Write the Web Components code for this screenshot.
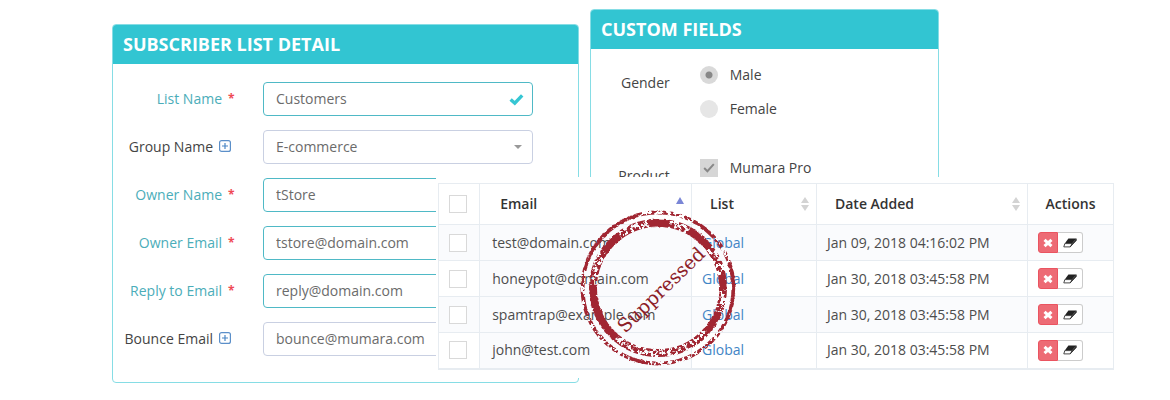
<!DOCTYPE html>
<html lang="en">
<head>
<meta charset="utf-8">
<title>Suppression list</title>
<style>
body { margin: 0; background: #fff; font-family: "Open Sans", "Noto Sans", sans-serif; font-size: 14px; color: #4d4d4d; }
</style>
</head>
<body>
<list-stage>
  <titled-panel slot="detail" heading="SUBSCRIBER LIST DETAIL">
    <form-fields>
      <text-field label="List Name" value="Customers" state="required" checked></text-field>
      <pick-field label="Group Name" value="E-commerce"></pick-field>
      <text-field label="Owner Name" value="tStore" state="required"></text-field>
      <text-field label="Owner Email" value="tstore@domain.com" state="required"></text-field>
      <text-field label="Reply to Email" value="reply@domain.com" state="required"></text-field>
      <text-field label="Bounce Email" value="bounce@mumara.com"></text-field>
    </form-fields>
  </titled-panel>
  <titled-panel slot="custom" heading="CUSTOM FIELDS">
    <choice-group label="Gender" type="radio" options="Male,Female"></choice-group>
    <choice-group label="Product" type="checkbox" options="Mumara Pro"></choice-group>
  </titled-panel>
  <contact-table slot="table"></contact-table>
</list-stage>

<script>
const define = (name, markup, setup) => customElements.define(name, class extends HTMLElement {
  connectedCallback() {
    if (this.shadowRoot) return;
    const root = this.attachShadow({ mode: "open" });
    root.innerHTML = "<style>*{box-sizing:border-box}</style>" + (typeof markup === "function" ? markup(this) : markup);
    if (setup) setup(root, this);
  }
});
const attr = (el, n) => el.getAttribute(n) || "";

define("list-stage", `
<style>
  :host { display: grid; grid-template-columns: 112fr 324fr 143fr 11fr 349fr 177fr 54fr; align-items: start; }
  .detail { grid-area: 1 / 2 / 2 / 4; margin-top: 24px; }
  .custom { grid-area: 1 / 5 / 2 / 6; margin-top: 9px; }
  .table { grid-area: 1 / 3 / 2 / 7; margin-top: 177px; z-index: 1; }
</style>
<div class="detail"><slot name="detail"></slot></div>
<div class="custom"><slot name="custom"></slot></div>
<div class="table"><slot name="table"></slot></div>`);

define("titled-panel", el => `
<style>
  :host { display: block; border: 1px solid #86dde5; border-radius: 4px; overflow: hidden; background: #fff; }
  h2 { margin: -1px -1px 0; padding: 0 11px; background: #32c5d2; color: #fff; font-size: 18px; font-weight: 700; line-height: 40px; }
</style>
<h2>${attr(el, "heading")}</h2>
<slot></slot>`);

define("form-fields", `
<style>
  :host { display: flex; flex-direction: column; gap: 14px; padding: 18px 45px 26px 0; }
</style>
<slot></slot>`);

const fieldStyle = `
<style>
  :host { display: grid; grid-template-columns: 121fr 270fr; column-gap: 29px; align-items: center; color: #444; }
  label { display: flex; justify-content: flex-end; align-items: center; gap: 6px; padding-bottom: 2px; white-space: nowrap; }
  :host([state=required]) label { color: #4badb9; }
  .star { color: #ef4a55; width: 6px; font-size: 12px; font-weight: 700; }
  .plus { width: 12px; height: 12px; margin-right: 3px; }
  .box { position: relative; }
  input, select { display: block; width: 100%; height: 34px; margin: 0; padding: 0 12px 2px; border: 1px solid #c9d0e2; border-radius: 4px; background: #fff; color: #6b6b6b; font: inherit; appearance: none; outline: 0; }
  :host([state=required]) input { border-color: #4fb9c6; }
  .mark { position: absolute; right: 9px; top: 11px; }
  .caret { position: absolute; right: 11px; top: 15px; }
</style>`;
const labelFor = el => `<label for="f">${attr(el, "label")}${attr(el, "state") === "required"
  ? `<span class="star">*</span>`
  : `<svg class="plus" viewBox="0 0 12 12"><rect x=".6" y=".6" width="10.8" height="10.8" rx="2" fill="none" stroke="#5b8fc9" stroke-width="1.2"/><path d="M6 3v6M3 6h6" stroke="#4a86c5" stroke-width="1.2"/></svg>`}</label>`;

define("text-field", el => `${fieldStyle}${labelFor(el)}
<div class="box"><input id="f" type="text" value="${attr(el, "value")}">
${el.hasAttribute("checked") ? `<svg class="mark" width="15" height="13" viewBox="0 0 15 13"><path d="M1.6 6.4 5.8 10.2 13.2 2.4" fill="none" stroke="#36c6d3" stroke-width="3.4"/></svg>` : ""}</div>`);

define("pick-field", el => `${fieldStyle}${labelFor(el)}
<div class="box"><select id="f"><option>${attr(el, "value")}</option></select>
<svg class="caret" width="8" height="4" viewBox="0 0 8 4"><path d="M0 0h8L4 4z" fill="#999"/></svg></div>`);

define("choice-group", el => `
<style>
  :host { display: block; padding: 17px 0 24px; color: #444; }
  fieldset { display: grid; grid-template-columns: 79fr 239fr; column-gap: 30px; margin: 0; padding: 0; border: 0; }
  .name { text-align: right; line-height: 20px; padding-top: 7px; }
  .list { display: grid; gap: 16px; }
  label { display: flex; align-items: center; gap: 12px; height: 18px; line-height: 18px; }
  input { appearance: none; width: 18px; height: 18px; margin: 0; background: #e6e6e6; }
  input[type=radio] { border-radius: 50%; }
  input[type=radio]:checked { background: radial-gradient(circle, #888 3px, #d9d9d9 4px); }
  .tick { position: relative; display: flex; }
  input[type=checkbox]:checked { background: #d6d6d6; }
  svg { position: absolute; left: 3px; top: 4px; }
</style>
<fieldset aria-label="${attr(el, "label")}">
  <div class="name">${attr(el, "label")}</div>
  <div class="list">${attr(el, "options").split(",").map((o, i) => `
    <label><span class="tick"><input type="${attr(el, "type")}" name="c"${i ? "" : " checked"}>${attr(el, "type") === "checkbox"
      ? `<svg width="12" height="10" viewBox="0 0 12 10"><path d="M1.2 5 4.4 8.2 10.8 1.2" fill="none" stroke="#888" stroke-width="2"/></svg>` : ""}</span>${o}</label>`).join("")}
  </div>
</fieldset>`);

define("sort-arrows", el => `
<style>:host { display: block; width: 8px; } svg { display: block; }</style>
${attr(el, "dir") === "up"
  ? `<svg width="8" height="14" viewBox="0 0 8 14"><path d="M0 7h8L4 0z" fill="#7a86d6"/></svg>`
  : `<svg width="8" height="14" viewBox="0 0 8 14"><path d="M0 6h8L4 0zM0 8h8L4 14z" fill="#d3d3d3"/></svg>`}`);

define("row-actions", `
<style>
  :host { display: flex; }
  button { display: flex; align-items: center; justify-content: center; height: 21px; margin: 0; padding: 0; }
  .del { width: 20px; background: #ed6b75; border: 1px solid #ea5460; border-radius: 3px 0 0 3px; }
  .clear { width: 25px; background: #fff; border: 1px solid #ccc; border-left: 0; border-radius: 0 3px 3px 0; }
</style>
<button class="del" aria-label="Delete"><svg width="10" height="10" viewBox="0 0 10 10"><path d="M1.5 1.8 8.5 8.2M8.5 1.8 1.5 8.2" stroke="#fff" stroke-width="3"/></svg></button>
<button class="clear" aria-label="Clear"><svg width="14" height="10" viewBox="0 0 14 10"><path d="M5.4.5h7.8L9.4 5.6H1.8z" fill="#222"/><path d="M1.8 5.6h7.4L7.2 8.9H.8zM9.2 5.6 13.2.8v1.8L7.2 8.9" fill="#fff" stroke="#333" stroke-width=".9" stroke-linejoin="round"/><path d="M9.2 5.6 13.2.8v1.8L7.2 8.9z" fill="#333"/></svg></button>`);

define("round-stamp", `
<style>
  :host { display: block; width: 160px; height: 160px; pointer-events: none; }
  svg { display: block; }
  text { font: 19px "DejaVu Serif", serif; fill: #8c2027; }
</style>
<svg width="160" height="160" viewBox="-80 -80 160 160">
  <defs>
    <filter id="worn" x="-80" y="-80" width="160" height="160" filterUnits="userSpaceOnUse">
      <feTurbulence type="fractalNoise" baseFrequency=".3" numOctaves="3" seed="7" result="n"/>
      <feColorMatrix in="n" type="matrix" values="0 0 0 0 0  0 0 0 0 0  0 0 0 0 0  0 0 0 12 -5.2" result="m"/>
      <feComposite in="SourceGraphic" in2="m" operator="in"/>
    </filter>
    <filter id="rough" x="-80" y="-80" width="160" height="160" filterUnits="userSpaceOnUse">
      <feTurbulence type="fractalNoise" baseFrequency=".3" numOctaves="2" seed="3" result="n"/>
      <feDisplacementMap in="SourceGraphic" in2="n" scale="3" xChannelSelector="R" yChannelSelector="G"/>
    </filter>
  </defs>
  <g fill="none" stroke="#a12733">
    <g filter="url(#worn)"><circle r="75.5" stroke-width="4"/><circle r="65" stroke-width="8"/></g>
    <g filter="url(#rough)" id="solid"></g>
  </g>
  <text text-anchor="middle" transform="rotate(-44)" x="1" y="10">Suppressed</text>
</svg>`, root => {
  // Well inked parts of the two rings: radius, width, start and end in degrees, clockwise from the right.
  const arcs = [[65, 7, 130, 183], [65, 7, 22, 42], [65, 7, -12, 2], [65, 7, -62, -38], [65, 7, -98, -80], [65, 7, 214, 234],
    [75.5, 3, 195, 255], [75.5, 3, -20, 25], [75.5, 3, -62, -48], [75.5, 3, 100, 112]];
  const at = (r, d) => [r * Math.cos(d * Math.PI / 180), r * Math.sin(d * Math.PI / 180)].map(v => v.toFixed(1)).join(" ");
  root.getElementById("solid").innerHTML = arcs.map(([r, w, a, b]) =>
    `<path stroke-width="${w}" d="M${at(r, a)}A${r} ${r} 0 0 1 ${at(r, b)}"/>`).join("");
});

define("contact-table", () => {
  const rows = [["test@domain.com", "Jan 09, 2018 04:16:02 PM"], ["honeypot@domain.com", "Jan 30, 2018 03:45:58 PM"],
    ["spamtrap@example.com", "Jan 30, 2018 03:45:58 PM"], ["john@test.com", "Jan 30, 2018 03:45:58 PM"]];
  return `
<style>
  :host { display: block; position: relative; padding: 6px 2px 8px; background: #fff; }
  table { width: 100%; table-layout: fixed; border-collapse: collapse; border: 1px solid #e7ecf1; border-bottom-width: 2px; }
  col:nth-child(1) { width: 6.1% } col:nth-child(2) { width: 31.4% } col:nth-child(3) { width: 18.5% } col:nth-child(4) { width: 31.2% }
  th, td { border: 1px solid #e7ecf1; text-align: left; line-height: 20px; white-space: nowrap; }
  th { height: 41px; padding: 0 7px 0 18px; color: #333; font-weight: 600; }
  td { height: 36px; padding: 0 10px; color: #4d4d4d; }
  th:first-child { padding: 0 10px; }
  th:nth-child(2) { padding-left: 20px; }
  td:nth-child(2) { padding-left: 12px; background: #fafbfd; }
  .head { display: flex; justify-content: space-between; align-items: center; }
  tbody tr:nth-child(odd) { background: #fafbfd; }
  input { appearance: none; display: block; width: 18px; height: 18px; margin: 0; border: 1px solid #d9d9d9; background: #fff; }
  a { color: #4285c5; text-decoration: none; }
  round-stamp { position: absolute; left: 142px; top: 31px; }
</style>
<table>
  <colgroup><col><col><col><col><col></colgroup>
  <thead><tr>
    <th><input type="checkbox" aria-label="Select all"></th>
    <th><div class="head">Email<sort-arrows dir="up"></sort-arrows></div></th>
    <th><div class="head">List<sort-arrows></sort-arrows></div></th>
    <th><div class="head">Date Added<sort-arrows></sort-arrows></div></th>
    <th>Actions</th>
  </tr></thead>
  <tbody>${rows.map(([mail, date]) => `<tr>
    <td><input type="checkbox" aria-label="Select ${mail}"></td><td>${mail}</td><td><a href="#">Global</a></td><td>${date}</td><td><row-actions></row-actions></td></tr>`).join("")}
  </tbody>
</table>
<round-stamp></round-stamp>`;
});
</script>
</body>
</html>
